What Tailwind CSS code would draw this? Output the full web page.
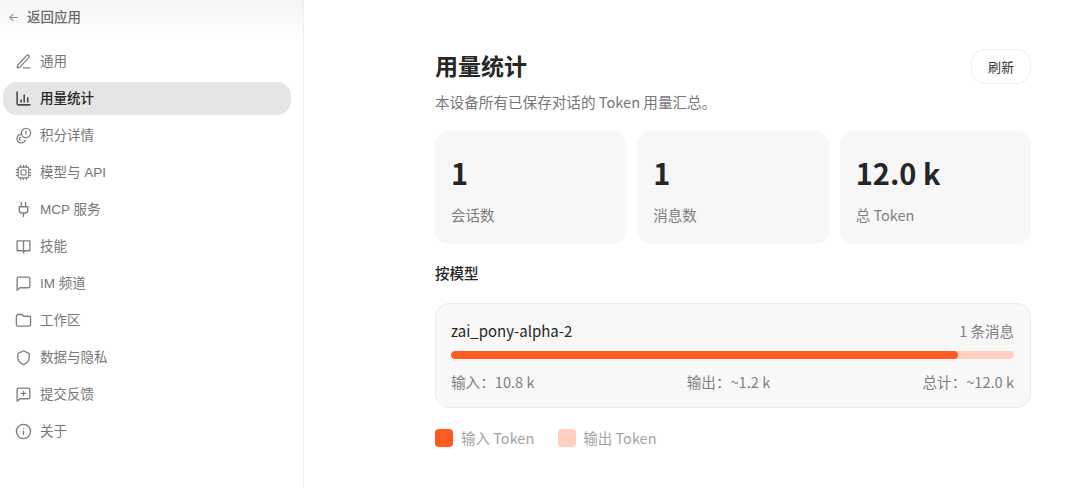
<!DOCTYPE html>
<html lang="zh-CN">
<head>
  <meta charset="UTF-8">
  <title>用量统计</title>
  <script src="https://cdn.jsdelivr.net/npm/@tailwindcss/browser@4"></script>
</head>
<body class="bg-white h-[488px] w-[1080px] overflow-hidden">
  <div class="flex h-full font-['Noto_Sans_CJK_SC',sans-serif]">
    <aside class="w-[304px] shrink-0 h-full border-r border-[#f0f0f0] bg-white font-['Liberation_Sans','Noto_Sans_CJK_SC',sans-serif]">
      <div class="h-[40px] pl-[8px] flex items-center gap-[8px] pb-[5px] bg-gradient-to-b from-[#f4f4f4] to-white text-[#6b6b6b]">
        <svg class="w-[11px] h-[11px]" viewBox="0 0 24 24" fill="none" stroke="#8a8a8a" stroke-width="2.2" stroke-linecap="round" stroke-linejoin="round"><path d="M20 12H4M11 5l-7 7 7 7"/></svg>
        <span class="text-[13.5px] font-medium leading-none">返回应用</span>
      </div>
      <nav class="mt-[5px] ml-[3px] w-[288px] flex flex-col gap-[4px] text-[13.5px] text-[#777777]">
        <a class="h-[33px] rounded-[14px] flex items-center gap-[8px] pl-[12px]">
          <svg class="w-[17px] h-[17px]" viewBox="0 0 24 24" fill="none" stroke="#808080" stroke-width="1.8" stroke-linecap="round" stroke-linejoin="round"><path d="M12 21h9M16.5 3.5a2.12 2.12 0 0 1 3 3L7 20l-4 1 1-4z"/></svg>
          <span class="pt-[2px]">通用</span>
        </a>
        <a class="h-[33px] rounded-[14px] flex items-center gap-[8px] pl-[12px] bg-[#e5e5e5] text-[#262626] font-medium">
          <svg class="w-[17px] h-[17px]" viewBox="0 0 24 24" fill="none" stroke="#4a4a4a" stroke-width="2.2" stroke-linecap="round" stroke-linejoin="round"><path d="M3 3v16a2 2 0 0 0 2 2h16M8.5 17v-3M13 17V7M18 17v-6"/></svg>
          <span class="pt-[2px]">用量统计</span>
        </a>
        <a class="h-[33px] rounded-[14px] flex items-center gap-[8px] pl-[12px]">
          <svg class="w-[17px] h-[17px]" viewBox="0 0 24 24" fill="none" stroke="#808080" stroke-width="1.8" stroke-linecap="round" stroke-linejoin="round"><circle cx="15.5" cy="8.5" r="6.5"/><path d="M15.5 6v4"/><path d="M8 10.5a6 6 0 1 0 6.5 8"/><path d="M8 14.5a2 2 0 0 0 0 4"/></svg>
          <span class="pt-[2px]">积分详情</span>
        </a>
        <a class="h-[33px] rounded-[14px] flex items-center gap-[8px] pl-[12px]">
          <svg class="w-[17px] h-[17px]" viewBox="0 0 24 24" fill="none" stroke="#808080" stroke-width="1.7" stroke-linecap="round" stroke-linejoin="round"><rect x="4.5" y="4.5" width="15" height="15" rx="2.5"/><rect x="8.5" y="8.5" width="7" height="7" rx="1"/><path d="M8 2v2M12 2v2M16 2v2M8 20v2M12 20v2M16 20v2M2 8h2M2 12h2M2 16h2M20 8h2M20 12h2M20 16h2"/></svg>
          <span class="pt-[2px]">模型与 API</span>
        </a>
        <a class="h-[33px] rounded-[14px] flex items-center gap-[8px] pl-[12px]">
          <svg class="w-[17px] h-[17px]" viewBox="0 0 24 24" fill="none" stroke="#808080" stroke-width="2" stroke-linecap="round" stroke-linejoin="round"><path d="M12 22v-5M9 8V2M15 8V2M18 8v5a4 4 0 0 1-4 4h-4a4 4 0 0 1-4-4V8z"/></svg>
          <span class="pt-[2px]">MCP 服务</span>
        </a>
        <a class="h-[33px] rounded-[14px] flex items-center gap-[8px] pl-[12px]">
          <svg class="w-[17px] h-[17px]" viewBox="0 0 24 24" fill="none" stroke="#808080" stroke-width="1.9" stroke-linecap="round" stroke-linejoin="round"><path d="M12 4v17M3 4h18v14h-7.5L12 20l-1.5-2H3z"/></svg>
          <span class="pt-[2px]">技能</span>
        </a>
        <a class="h-[33px] rounded-[14px] flex items-center gap-[8px] pl-[12px]">
          <svg class="w-[17px] h-[17px]" viewBox="0 0 24 24" fill="none" stroke="#808080" stroke-width="1.9" stroke-linecap="round" stroke-linejoin="round"><path d="M5 3h14a2 2 0 0 1 2 2v11a2 2 0 0 1-2 2H7l-4 3.5V5a2 2 0 0 1 2-2z"/></svg>
          <span class="pt-[2px]">IM 频道</span>
        </a>
        <a class="h-[33px] rounded-[14px] flex items-center gap-[8px] pl-[12px]">
          <svg class="w-[17px] h-[17px]" viewBox="0 0 24 24" fill="none" stroke="#808080" stroke-width="1.9" stroke-linecap="round" stroke-linejoin="round"><path d="M20 20a2 2 0 0 0 2-2V8a2 2 0 0 0-2-2h-8L10 3.5H4a2 2 0 0 0-2 2V18a2 2 0 0 0 2 2z"/></svg>
          <span class="pt-[2px]">工作区</span>
        </a>
        <a class="h-[33px] rounded-[14px] flex items-center gap-[8px] pl-[12px]">
          <svg class="w-[17px] h-[17px]" viewBox="0 0 24 24" fill="none" stroke="#808080" stroke-width="1.9" stroke-linecap="round" stroke-linejoin="round"><path d="M12 22c5-2 8-5 8-10V6.5L12 2.5 4 6.5V12c0 5 3 8 8 10z"/></svg>
          <span class="pt-[2px]">数据与隐私</span>
        </a>
        <a class="h-[33px] rounded-[14px] flex items-center gap-[8px] pl-[12px]">
          <svg class="w-[17px] h-[17px]" viewBox="0 0 24 24" fill="none" stroke="#808080" stroke-width="1.9" stroke-linecap="round" stroke-linejoin="round"><path d="M5 3h14a2 2 0 0 1 2 2v11a2 2 0 0 1-2 2H7l-4 3.5V5a2 2 0 0 1 2-2z"/><path d="M12 7.5v6M9 10.5h6"/></svg>
          <span class="pt-[2px]">提交反馈</span>
        </a>
        <a class="h-[33px] rounded-[14px] flex items-center gap-[8px] pl-[12px]">
          <svg class="w-[17px] h-[17px]" viewBox="0 0 24 24" fill="none" stroke="#808080" stroke-width="1.9" stroke-linecap="round" stroke-linejoin="round"><circle cx="12" cy="12" r="10"/><path d="M12 16v-4.5M12 8h.01"/></svg>
          <span class="pt-[2px]">关于</span>
        </a>
      </nav>
    </aside>

    <main class="pl-[131px] pt-[49px] w-[727px]">
      <div class="w-[596px]">
        <div class="flex justify-between items-start">
          <h1 class="text-[23px] leading-[32px] font-bold text-[#262626]">用量统计</h1>
          <button class="h-[35px] w-[60px] rounded-[14px] border border-[#f0f0f0] bg-white text-[13px] text-[#333333]">刷新</button>
        </div>
        <p class="mt-[8px] text-[14.6px] leading-[20px] text-[#777777]">本设备所有已保存对话的 Token 用量汇总。</p>

        <div class="mt-[19px] grid grid-cols-3 gap-[11px]">
          <div class="h-[113px] rounded-[14px] bg-[#f7f7f7] pl-[16px] pt-[19px]">
            <div class="text-[29px] leading-[44px] font-bold text-[#262626]">1</div>
            <div class="mt-[11px] text-[14.5px] leading-[20px] text-[#808080]">会话数</div>
          </div>
          <div class="h-[113px] rounded-[14px] bg-[#f7f7f7] pl-[16px] pt-[19px]">
            <div class="text-[29px] leading-[44px] font-bold text-[#262626]">1</div>
            <div class="mt-[11px] text-[14.5px] leading-[20px] text-[#808080]">消息数</div>
          </div>
          <div class="h-[113px] rounded-[14px] bg-[#f7f7f7] pl-[16px] pt-[19px]">
            <div class="text-[29px] leading-[44px] font-bold text-[#262626]">12.0 k</div>
            <div class="mt-[11px] text-[14.5px] leading-[20px] text-[#808080]">总 Token</div>
          </div>
        </div>

        <h2 class="mt-[19px] text-[14.5px] leading-[20px] font-medium text-[#262626]">按模型</h2>

        <div class="mt-[20px] h-[105px] rounded-[14px] border border-[#ebebeb] bg-[#f8f8f8] pl-[15px] pr-[16px] pt-[16px]">
          <div class="flex justify-between items-center h-[22px]">
            <span class="text-[15px] font-normal text-[#262626]">zai_pony-alpha-2</span>
            <span class="text-[14.5px] text-[#808080]">1 条消息</span>
          </div>
          <div class="mt-[9px] h-[8px] rounded-full bg-[#ffd0bf] overflow-hidden">
            <div class="h-full w-[90%] rounded-full bg-[#ff5a1f]"></div>
          </div>
          <div class="mt-[13px] flex justify-between text-[14.6px] leading-[20px] text-[#808080]">
            <span>输入：10.8 k</span>
            <span>输出：~1.2 k</span>
            <span>总计：~12.0 k</span>
          </div>
        </div>

        <div class="mt-[19px] flex items-center gap-[24px] text-[14.5px] text-[#a3a3a3]">
          <div class="flex items-center gap-[8px]">
            <span class="w-[18px] h-[18px] rounded-[4px] bg-[#ff5a1f]"></span>
            <span>输入 Token</span>
          </div>
          <div class="flex items-center gap-[7px]">
            <span class="w-[18px] h-[18px] rounded-[4px] bg-[#ffd0bf]"></span>
            <span>输出 Token</span>
          </div>
        </div>
      </div>
    </main>
  </div>
</body>
</html>
